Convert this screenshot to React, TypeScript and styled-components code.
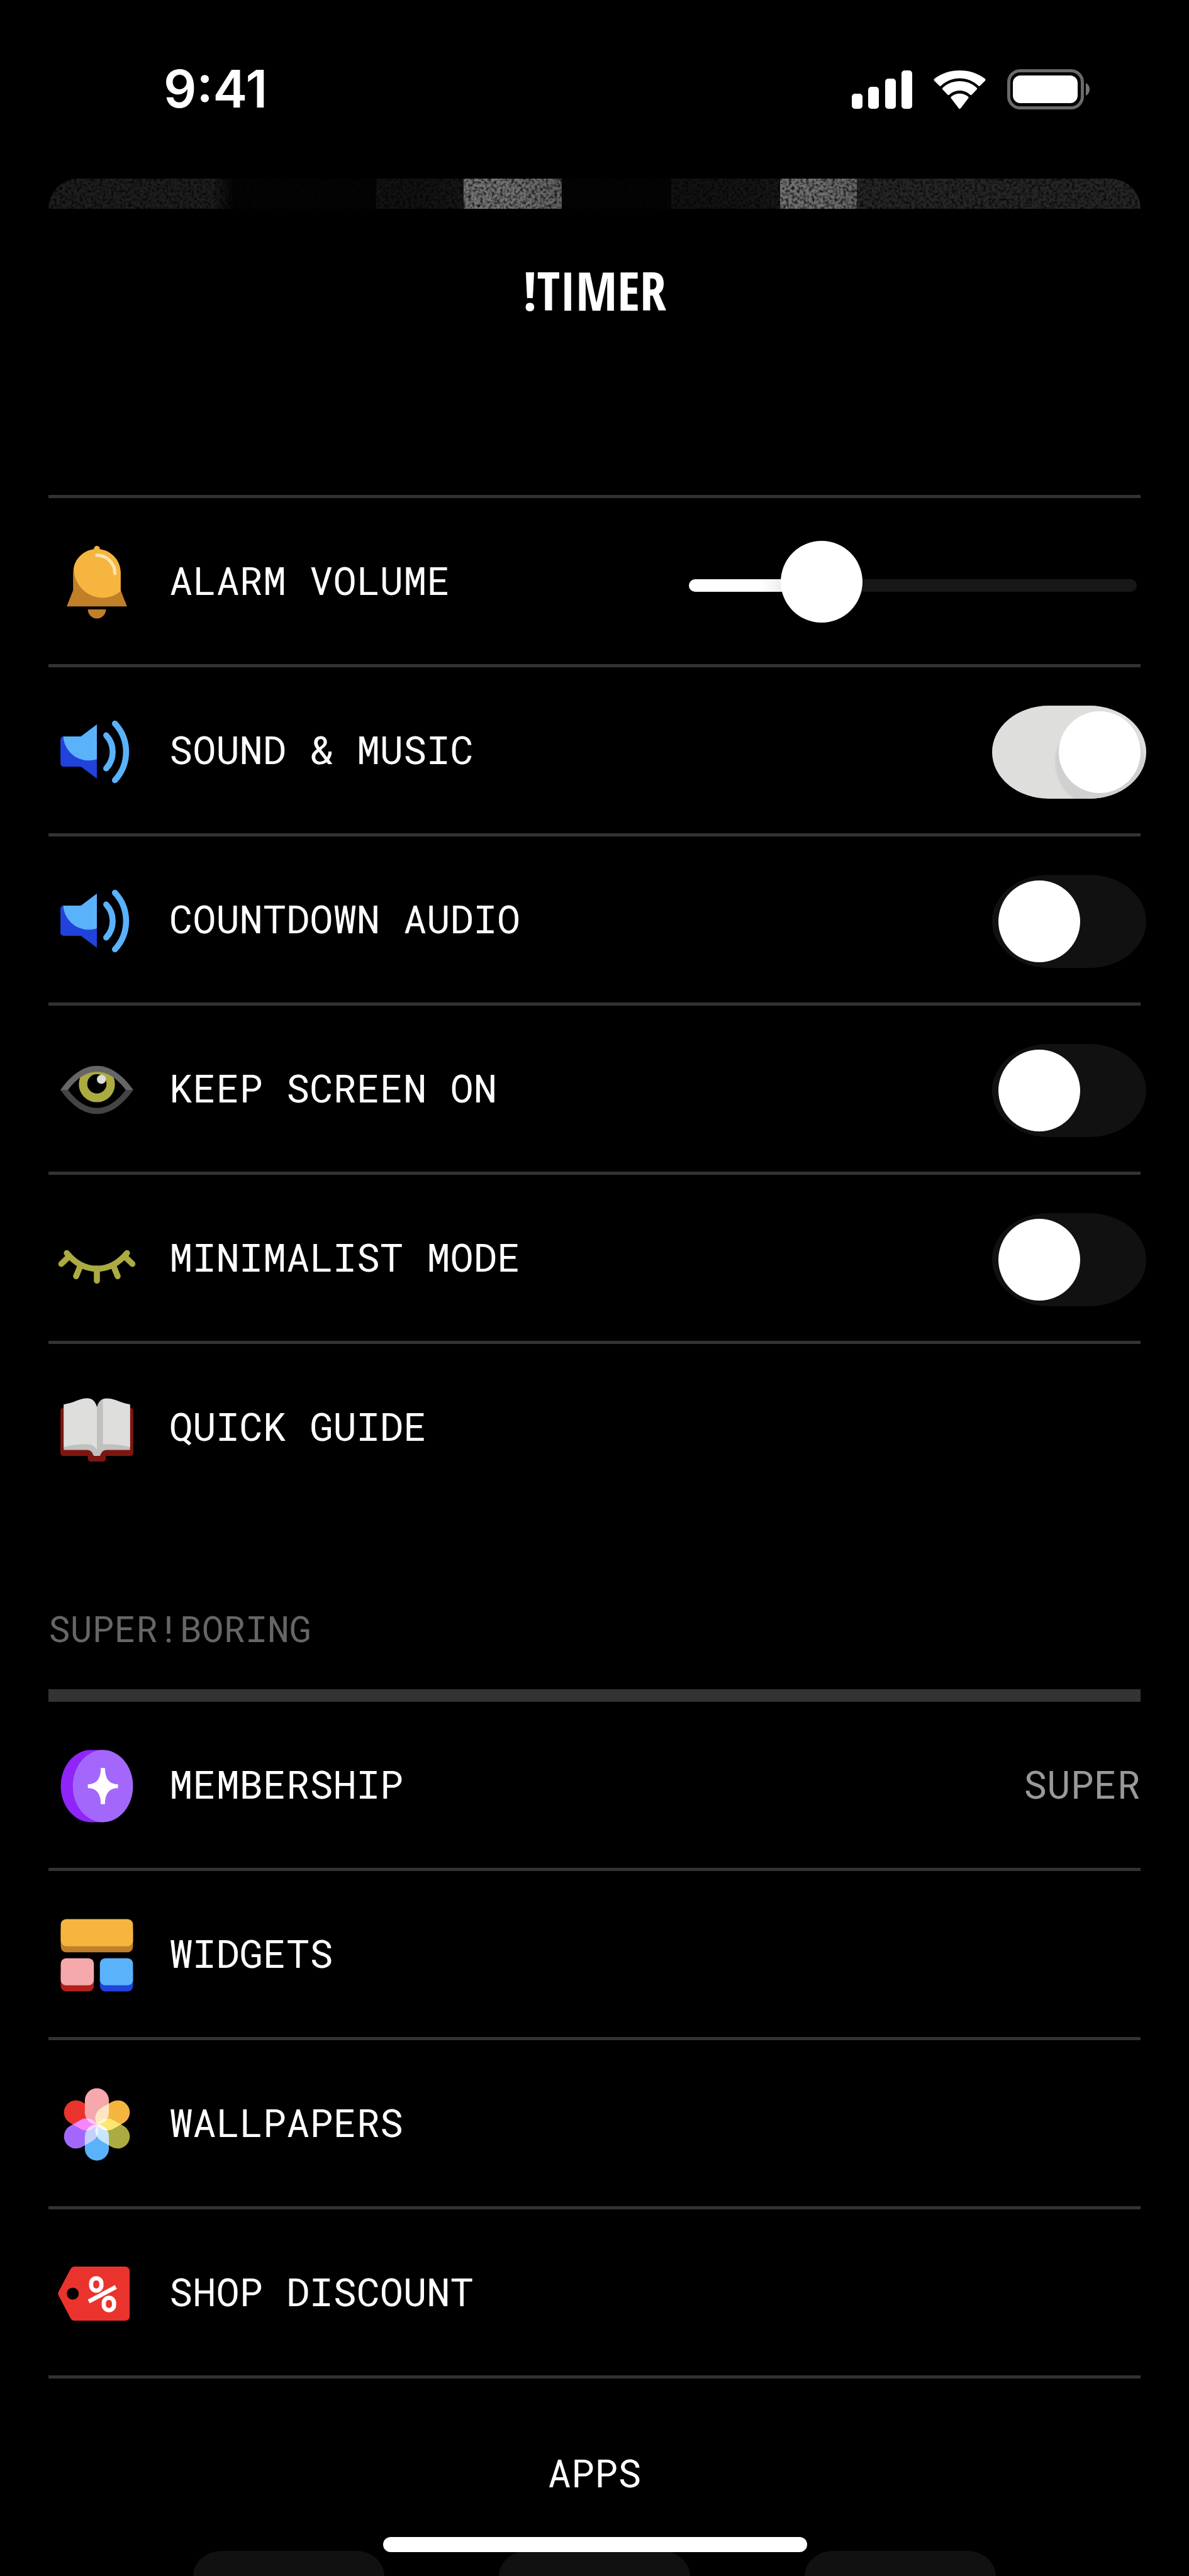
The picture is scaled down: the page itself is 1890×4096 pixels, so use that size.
import React, { useState } from 'react';
import styled, { createGlobalStyle } from 'styled-components';

const mono = `'Roboto Mono', 'Liberation Mono', monospace`;

const GlobalStyle = createGlobalStyle`
  * {
    box-sizing: border-box;
  }

  body {
    margin: 0;
    background: #000;
    color: #fff;
    font-family: ${mono};
  }
`;

export const Screen = styled.main`
  position: relative;
  display: flex;
  flex-direction: column;
  min-height: 100vh;
  overflow: hidden;
  background: #000;
`;

export const StatusBar = styled.header`
  display: flex;
  align-items: center;
  justify-content: space-between;
  height: 284px;
  padding: 0 157px 0 260px;
`;

export const Clock = styled.time`
  font-family: Inter, 'Liberation Sans', sans-serif;
  font-size: 82px;
  font-weight: 600;
  line-height: 100px;
`;

export const StatusIcons = styled.div`
  display: flex;
  align-items: center;
  gap: 34px;

  svg {
    display: block;
  }
`;

export const Content = styled.div`
  padding: 0 77px;
`;

export const Banner = styled.div`
  height: 48px;
  overflow: hidden;
  border-radius: 48px 48px 0 0;
  background: linear-gradient(
    to right,
    #1e1e1e 0 15%,
    #040404 17% 30%,
    #121212 30% 34%,
    #171717 38%,
    #747474 38% 42%,
    #626262 47%,
    #040404 47% 57%,
    #121212 57% 60%,
    #171717 67%,
    #707070 67% 70%,
    #656565 74%,
    #262626 74% 100%
  );

  svg {
    display: block;
    width: 100%;
    height: 100%;
  }
`;

export const Title = styled.h1`
  margin: 0;
  padding: 80px 0 275px;
  font-family: 'Open Sans Condensed', 'Roboto Condensed', sans-serif;
  font-size: 84px;
  font-weight: 700;
  line-height: 100px;
  text-align: center;
`;

export const List = styled.ul<{ $thick?: boolean; $closed?: boolean }>`
  margin: 0;
  padding: 0;
  list-style: none;
  border-top: ${({ $thick }) => ($thick ? '20px' : '5px')} solid #333;
  border-bottom: ${({ $closed }) => ($closed ? '5px' : '0')} solid #333;
`;

export const Item = styled.li`
  & + & {
    border-top: 5px solid #333;
  }
`;

export const Row = styled.div`
  display: flex;
  align-items: center;
  height: 264px;
  padding-left: 10px;
  color: #fff;
  text-decoration: none;
`;

export const Icon = styled.svg`
  flex: none;
  width: 134px;
  height: 134px;
  margin: 4px 48px 0 0;
  isolation: isolate;
`;

export const Label = styled.label`
  flex: 1;
  padding-bottom: 4px;
  font-size: 62px;
  line-height: 80px;
`;

export const Value = styled.span`
  padding-bottom: 4px;
  color: #999;
  font-size: 62px;
  line-height: 80px;
`;

export const SectionTitle = styled.h2`
  margin: 0;
  padding: 148px 0 57px;
  color: #666;
  font-size: 58px;
  font-weight: 400;
  line-height: 80px;
`;

export const Slider = styled.input<{ $value: number }>`
  appearance: none;
  width: 712px;
  height: 20px;
  margin: 14px 6px 0 0;
  border-radius: 10px;
  background: linear-gradient(
    to right,
    #fff 0,
    #fff ${({ $value }) => $value - 9}%,
    #ddd ${({ $value }) => $value}%,
    #171717 ${({ $value }) => $value}%
  );

  &::-webkit-slider-runnable-track {
    height: 20px;
  }

  &::-webkit-slider-thumb {
    appearance: none;
    width: 130px;
    height: 130px;
    margin-top: -61px;
    border-radius: 50%;
    background: #fff;
  }
`;

export const Switch = styled.input`
  appearance: none;
  display: flex;
  align-items: center;
  width: 245px;
  height: 148px;
  margin: 6px -9px 0 0;
  padding: 0 9px 0 10px;
  overflow: hidden;
  border-radius: 90px / 74px;
  background: #111;

  &::before {
    content: '';
    width: 130px;
    height: 130px;
    border-radius: 50%;
    background: #fff;
  }

  &:checked {
    justify-content: flex-end;
    background: #dededd;
  }

  &:checked::before {
    box-shadow: 0 16px 2px 6px #d0d0d0;
  }
`;

export const AppsTitle = styled.h2`
  margin: 0;
  padding: 109px 0 85px;
  font-size: 62px;
  font-weight: 400;
  line-height: 80px;
  text-align: center;
`;

export const AppTiles = styled.div`
  display: flex;
  justify-content: center;
  gap: 182px;
`;

export const AppTile = styled.div`
  width: 304px;
  height: 40px;
  border-radius: 80px 80px 0 0 / 70px 70px 0 0;
  background: #111;
`;

export const HomeIndicator = styled.div`
  position: absolute;
  bottom: 38px;
  left: 50%;
  width: 674px;
  height: 24px;
  margin-left: -336px;
  border-radius: 12px;
  background: #fff;
`;

function SignalIcon() {
  return (
    <svg width="96" height="61" viewBox="0 0 96 61" fill="#fff" aria-hidden="true">
      <rect x="0" y="37" width="17" height="24" rx="5" />
      <rect x="26" y="26" width="17" height="35" rx="5" />
      <rect x="53" y="13" width="17" height="48" rx="5" />
      <rect x="79" y="0" width="17" height="61" rx="5" />
    </svg>
  );
}

function WifiIcon() {
  return (
    <svg width="83" height="61" viewBox="0 0 83 61" fill="#fff" aria-hidden="true">
      <path d="M41.5 12.5C52.5 12.5 63 16.7 71 24.3a2 2 0 0 0 2.900 0L81.8 16.4a2.200 2.200 0 0 0 0-3.100C59.3-4.400 23.7-4.400 1.200 13.300a2.200 2.200 0 0 0 0 3.100L9.100 24.300a2 2 0 0 0 2.900 0C20 16.700 30.500 12.500 41.500 12.500Z" />
      <path d="M41.5 32C47.6 32 53.4 34.3 57.9 38.4a2.100 2.100 0 0 0 3 0L68.4 30.6a2.200 2.200 0 0 0 0-3.100C53.2 13.600 29.800 13.600 14.600 27.500a2.200 2.200 0 0 0 0 3.100L22.100 38.400a2.100 2.100 0 0 0 3 0C29.600 34.300 35.400 32 41.500 32Z" />
      <path d="M54.8 44.7a2.200 2.200 0 0 0 0-3.200 20.800 20.800 0 0 0-26.600 0 2.200 2.200 0 0 0 0 3.200L40 60.300a2.100 2.100 0 0 0 3 0Z" />
    </svg>
  );
}

function BatteryIcon() {
  return (
    <svg width="132" height="64" viewBox="0 0 132 64" aria-hidden="true">
      <rect x="2.5" y="2.5" width="117" height="59" rx="18" fill="none" stroke="#6a6a6a" strokeWidth="5" />
      <rect x="9" y="10" width="103" height="44" rx="12" fill="#fff" />
      <path d="M125 22c4 2 6 6 6 10s-2 8-6 10Z" fill="#757575" />
    </svg>
  );
}

// Film grain laid over the banner gradient as dark specks
function Grain() {
  return (
    <svg aria-hidden="true">
      <filter id="grain" x="0" y="0" width="100%" height="100%">
        <feTurbulence type="fractalNoise" baseFrequency="0.22" numOctaves="2" seed="4" />
        <feColorMatrix values="0 0 0 0 0  0 0 0 0 0  0 0 0 0 0  2 0 0 0 -0.8" />
      </filter>
      <rect width="100%" height="100%" filter="url(#grain)" />
    </svg>
  );
}

function BellIcon() {
  const body = 'M6.1 10.8a7.9 7.9 0 0 1 15.8 0V16.6L24 22H4L6.1 16.6Z';
  return (
    <Icon viewBox="0 0 28 28" aria-hidden="true">
      <clipPath id="bell-body">
        <path d={body} />
      </clipPath>
      <circle cx="14" cy="2.9" r="1" fill="#f5b53f" />
      <path d={body} fill="#c17f2a" />
      <circle cx="15.9" cy="9.6" r="9.5" fill="#f5b53f" clipPath="url(#bell-body)" />
      <path d="M14 5a6 6 0 0 1 6 6" fill="none" stroke="#fce4ae" strokeWidth="1.1" strokeLinecap="round" />
      <path d="M11 23h6a3 3 0 0 1-6 0Z" fill="#c17f2a" />
    </Icon>
  );
}

function SpeakerIcon({ id }: { id: string }) {
  const body = 'M2.9 9H8.7L14 5V23L8.7 19H2.9a1 1 0 0 1-1-1V10a1 1 0 0 1 1-1Z';
  return (
    <Icon viewBox="0 0 28 28" aria-hidden="true">
      <clipPath id={id}>
        <path d={body} />
      </clipPath>
      <path d={body} fill="#2142db" />
      <circle cx="11.3" cy="8.5" r="8.5" fill="#5ab2fb" clipPath={`url(#${id})`} />
      <g fill="none" stroke="#5ab2fb" strokeWidth="2" strokeLinecap="round">
        <path d="M17.1 8.6a8.1 8.1 0 0 1 0 11" />
        <path d="M20 4.7a13.8 13.8 0 0 1 0 18.8" />
      </g>
    </Icon>
  );
}

function EyeIcon() {
  return (
    <Icon viewBox="0 0 28 28" aria-hidden="true">
      <circle cx="14" cy="12.1" r="6" fill="#abab41" />
      <circle cx="14" cy="12" r="3.2" fill="#000" />
      <circle cx="15.5" cy="10.5" r="1.5" fill="#dedede" />
      <path d="M1.9 14C5.7 8.7 9.7 6 14 6S22.3 8.7 26.1 14H23.6C20.6 10 17.4 8 14 8S7.4 10 4.4 14Z" fill="#666" />
      <path d="M1.9 14C5.7 19.3 9.7 22 14 22S22.3 19.3 26.1 14H23.6C20.6 18 17.4 20 14 20S7.4 18 4.4 14Z" fill="#444" />
    </Icon>
  );
}

function LashesIcon() {
  return (
    <Icon viewBox="0 0 28 28" aria-hidden="true">
      <g fill="none" stroke="#abab41" strokeWidth="2" strokeLinecap="round">
        <path d="M4 12C6.9 15.5 10.2 17.2 14 17.2S21.1 15.5 24 12" />
        <path d="M4.7 13.2 2.2 15.6M23.3 13.2 25.8 15.6M8.5 16.3 7.1 19.7M19.5 16.3 20.9 19.7M14 17.2V21.2" />
      </g>
    </Icon>
  );
}

function BookIcon() {
  return (
    <Icon viewBox="0 0 28 28" aria-hidden="true">
      <path
        d="M2.9 7.2H25.1a1 1 0 0 1 1 1V22.2a1 1 0 0 1-1 1H17V24.1a1 1 0 0 1-1 1H12a1 1 0 0 1-1-1V23.2H2.9a1 1 0 0 1-1-1V8.2a1 1 0 0 1 1-1Z"
        fill="#7d1610"
      />
      <path
        d="M3 6.1C6.5 5.7 8 4.1 10.8 4.1C12.7 4.1 13.5 5.3 14 7C14.5 5.3 15.3 4.1 17.2 4.1C20 4.1 21.5 5.7 25 6.1V21.2H17.4C15.8 21.2 15.6 22 15 23.2H13C12.4 22 12.2 21.2 10.6 21.2H3Z"
        fill="#c0c0bf"
      />
      <path d="M3 6.1C6.5 5.7 8 4.1 10.8 4.1C12.7 4.1 13.5 5.3 14 7V21.2C13.3 20 12.3 19.3 10.6 19.3C7.5 19.3 5.5 19.6 3 20.3Z" fill="#dededd" />
      <path d="M16 4.4C19.6 3.5 21.5 5.7 25 6.1V20.3C22.5 19.6 20 19.3 16 19.3Z" fill="#dededd" />
    </Icon>
  );
}

function MembershipIcon() {
  return (
    <Icon viewBox="0 0 28 28" aria-hidden="true">
      <path d="M12 2H16V26H12A10 12 0 0 1 12 2Z" fill="#8f25f8" />
      <ellipse cx="16" cy="14" rx="10" ry="12" fill="#a467fb" />
      <path
        d="M15.3 8H16.7C16.7 11.8 18.3 13.4 21 13.4V14.7C18.3 14.7 16.7 16.3 16.7 20H15.3C15.3 16.3 13.7 14.7 11 14.7V13.4C13.7 13.4 15.3 11.8 15.3 8Z"
        fill="#fff"
      />
    </Icon>
  );
}

function WidgetsIcon() {
  return (
    <Icon viewBox="0 0 28 28" aria-hidden="true">
      <rect x="2" y="4" width="24" height="9" rx="1.8" fill="#c17f2a" />
      <rect x="2" y="2" width="24" height="9" rx="1.8" fill="#f5b53f" />
      <rect x="2" y="18" width="11" height="8" rx="1.8" fill="#b0231b" />
      <rect x="2" y="15" width="11" height="9" rx="1.8" fill="#f5a9ac" />
      <rect x="15" y="18" width="11" height="8" rx="1.8" fill="#2142db" />
      <rect x="15" y="15" width="11" height="9" rx="1.8" fill="#5ab2fb" />
    </Icon>
  );
}

const petals = [
  { angle: 240, color: '#a467fb' },
  { angle: 120, color: '#abab41' },
  { angle: 180, color: '#5ab2fb' },
  { angle: 60, color: '#f5b53f' },
];

const Petal = styled.rect`
  mix-blend-mode: screen;
`;

function WallpapersIcon() {
  return (
    <Icon viewBox="0 0 28 28" aria-hidden="true">
      <rect x="10" y="2" width="8" height="12" rx="4" fill="#ea332d" transform="rotate(300 14 14)" />
      <rect x="10" y="2" width="8" height="12" rx="4" fill="#f5a9ac" />
      {petals.map(({ angle, color }) => (
        <Petal key={angle} x="10" y="2" width="8" height="12" rx="4" fill={color} transform={`rotate(${angle} 14 14)`} />
      ))}
    </Icon>
  );
}

function DiscountIcon() {
  return (
    <Icon viewBox="0 0 28 28" aria-hidden="true">
      <path
        fillRule="evenodd"
        d="M6.6 5H23.4A1.5 1.5 0 0 1 24.9 6.5V21.5A1.5 1.5 0 0 1 23.4 23H6.6C6 23 5.5 22.7 5.2 22.1L1.3 14.7Q.9 14 1.3 13.3L5.2 5.9C5.5 5.3 6 5 6.6 5ZM6 12A2 2 0 1 0 6 16A2 2 0 1 0 6 12Z"
        fill="#ea332d"
      />
      <g fill="none" stroke="#fff" strokeWidth="1.4">
        <rect x="12.100" y="8.900" width="3.400" height="4.100" rx="1.700" />
        <rect x="16.300" y="15.400" width="3.400" height="4.100" rx="1.700" />
        <path d="M11.300 16.600 20.300 11.800" />
      </g>
    </Icon>
  );
}

interface SwitchRowProps {
  id: string;
  icon: React.ReactNode;
  label: string;
  defaultChecked?: boolean;
}

function SwitchRow({ id, icon, label, defaultChecked }: SwitchRowProps) {
  return (
    <Item>
      <Row>
        {icon}
        <Label htmlFor={id}>{label}</Label>
        <Switch type="checkbox" role="switch" id={id} defaultChecked={defaultChecked} />
      </Row>
    </Item>
  );
}

interface LinkRowProps {
  href: string;
  icon: React.ReactNode;
  label: string;
  value?: string;
}

function LinkRow({ href, icon, label, value }: LinkRowProps) {
  return (
    <Item>
      <Row as="a" href={href}>
        {icon}
        <Label as="span">{label}</Label>
        {value && <Value>{value}</Value>}
      </Row>
    </Item>
  );
}

export default function App() {
  const [volume, setVolume] = useState(25);

  return (
    <Screen>
      <GlobalStyle />
      <StatusBar>
        <Clock>9:41</Clock>
        <StatusIcons>
          <SignalIcon />
          <WifiIcon />
          <BatteryIcon />
        </StatusIcons>
      </StatusBar>

      <Content>
        <Banner>
          <Grain />
        </Banner>
        <Title>!TIMER</Title>

        <List>
          <Item>
            <Row>
              <BellIcon />
              <Label htmlFor="alarm-volume">ALARM VOLUME</Label>
              <Slider
                type="range"
                id="alarm-volume"
                min={0}
                max={100}
                value={volume}
                $value={volume}
                onChange={(e) => setVolume(Number(e.target.value))}
              />
            </Row>
          </Item>
          <SwitchRow id="sound" icon={<SpeakerIcon id="speaker-sound" />} label="SOUND & MUSIC" defaultChecked />
          <SwitchRow id="countdown" icon={<SpeakerIcon id="speaker-countdown" />} label="COUNTDOWN AUDIO" />
          <SwitchRow id="screen-on" icon={<EyeIcon />} label="KEEP SCREEN ON" />
          <SwitchRow id="minimalist" icon={<LashesIcon />} label="MINIMALIST MODE" />
          <LinkRow href="#guide" icon={<BookIcon />} label="QUICK GUIDE" />
        </List>

        <SectionTitle>SUPER!BORING</SectionTitle>
        <List $thick $closed>
          <LinkRow href="#membership" icon={<MembershipIcon />} label="MEMBERSHIP" value="SUPER" />
          <LinkRow href="#widgets" icon={<WidgetsIcon />} label="WIDGETS" />
          <LinkRow href="#wallpapers" icon={<WallpapersIcon />} label="WALLPAPERS" />
          <LinkRow href="#discount" icon={<DiscountIcon />} label="SHOP DISCOUNT" />
        </List>

        <AppsTitle>APPS</AppsTitle>
        <AppTiles>
          <AppTile />
          <AppTile />
          <AppTile />
        </AppTiles>
      </Content>
      <HomeIndicator />
    </Screen>
  );
}
